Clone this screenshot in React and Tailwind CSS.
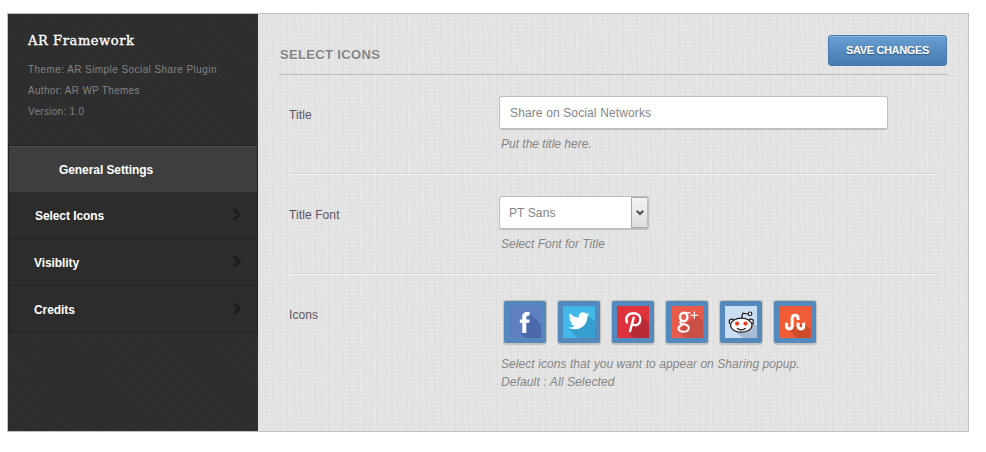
import React from "react";

const PAPER =
  "bg-[#e2e2e2] bg-[repeating-linear-gradient(90deg,rgba(255,255,255,0.16)_0_1px,transparent_1px_3px),repeating-linear-gradient(90deg,rgba(0,0,0,0.01)_0_2px,transparent_2px_7px),repeating-linear-gradient(84deg,rgba(0,0,0,0.012)_0_1px,transparent_1px_5px),repeating-linear-gradient(0deg,rgba(255,255,255,0.1)_0_1px,transparent_1px_4px)]";

const DARK =
  "bg-[#2e2e2e] bg-[repeating-linear-gradient(45deg,rgba(255,255,255,0.01)_0_1px,transparent_1px_3px),repeating-linear-gradient(-45deg,rgba(0,0,0,0.03)_0_1px,transparent_1px_4px)]";

function NavItem({ label, indent }) {
  return (
    <a className={`flex h-[47px] items-center justify-between border-b border-[#232323] bg-[#2c2c2c] pr-[15px] ${indent}`}>
      <span className="pt-[2px] text-[12px] font-bold tracking-[-0.08px] text-white">{label}</span>
      <svg className="h-[16px] w-[10px]" viewBox="0 0 10 16" fill="none">
        <path d="M2 3 L7 8.4 L2 13.8" stroke="#3b3b3b" strokeWidth="3.4" />
        <path d="M2 2.4 L7 7.8 L2 13.2" stroke="#1d1d1d" strokeWidth="3.4" />
      </svg>
    </a>
  );
}

function Tile({ color, shade, shadow, children }) {
  return (
    <div className="flex h-[42px] w-[42px] items-center justify-center rounded-[2px] bg-[#5489be] shadow-[0_0_0_1px_#c2c0bc,0_2px_1px_rgba(0,0,0,0.15)]">
      <svg className="h-8 w-8" viewBox="0 0 32 32">
        <rect width="32" height="32" fill={color} />
        <path d={shadow} fill={shade} />
        {children}
      </svg>
    </div>
  );
}

function Row({ label, children, className }) {
  return (
    <div className={`flex ${className}`}>
      <div className="w-[210px] pt-[30px] text-[12px] leading-[20px] tracking-[0.1px] text-[#5c5360]">{label}</div>
      <div className="flex-1 pt-[21px]">{children}</div>
    </div>
  );
}

const HINT = "pl-[2px] text-[12px] italic leading-[18px] text-[#858585]";

export default function App() {
  return (
    <div className="h-[452px] w-[986px] bg-white pl-[7px] pt-[13px] font-['Liberation_Sans',Arial,sans-serif]">
      <div className="flex h-[419px] w-[962px] border border-[#c0c0c0]">
        <aside className={`w-[250px] ${DARK}`}>
          <div className="h-[131px] pl-5 pt-[17px]">
            <h1 className="font-['DejaVu_Serif',serif] text-[13px] leading-[20px] tracking-[0.6px] text-white [-webkit-text-stroke:0.35px_#fff]">AR Framework</h1>
            <div className="pt-[8px] text-[10px] leading-[21px] tracking-[0.43px] text-[#838383]">
              <p>Theme: AR Simple Social Share Plugin</p>
              <p className="tracking-[0.3px]">Author: AR WP Themes</p>
              <p className="tracking-[0.3px]">Version: 1.0</p>
            </div>
          </div>
          <nav className="border-x border-t border-[#232323]">
            <a className="flex h-[46px] items-center border-t border-[#4d4d4f] bg-[#3e3e40] pl-[50px] text-[12px] font-bold tracking-[-0.08px] text-white">
              General Settings
            </a>
            <NavItem label="Select Icons" indent="pl-[26px]" />
            <NavItem label="Visiblity" indent="pl-[25px]" />
            <NavItem label="Credits" indent="pl-[25px]" />
          </nav>
        </aside>
        <main className={`flex-1 pl-[21px] pr-[20px] ${PAPER}`}>
          <header className="flex h-[61px] justify-between border-b border-[#bdbdbd] pt-[21px]">
            <h2 className="pl-[1px] pt-[10px] text-[13px] font-bold leading-[20px] tracking-[0.35px] text-[#858585] [text-shadow:0_1px_0_#eee]">SELECT ICONS</h2>
            <button className="mr-px h-[31px] w-[119px] rounded-[3px] border border-[#467aae] bg-gradient-to-b from-[#699fd3] to-[#467aad] text-[11px] font-bold tracking-[-0.36px] text-white shadow-[inset_0_1px_0_#8ab6e0] [text-shadow:0_1px_1px_#2d5885]">
              SAVE CHANGES
            </button>
          </header>
          <div className="pl-[10px] pr-[10px]">
            <Row label="Title" className="h-[100px] border-b border-[#f6f6f6] shadow-[inset_0_-1px_0_#d3d3d3]">
              <div className="flex h-[34px] w-[389px] items-center rounded-[3px] border border-b-2 border-[#bebebe] bg-white pl-[10px] text-[12px] tracking-[0.13px] text-[#858585]">
                Share on Social Networks
              </div>
              <p className={`pt-[5px] ${HINT}`}>Put the title here.</p>
            </Row>
            <Row label="Title Font" className="h-[100px] border-b border-[#f6f6f6] shadow-[inset_0_-1px_0_#d3d3d3]">
              <div className="flex h-[34px] w-[150px] items-stretch rounded-[3px] border border-b-2 border-r-2 border-[#bebebe] bg-white">
                <span className="flex flex-1 items-center pl-[9px] text-[12px] tracking-[0.1px] text-[#858585]">PT Sans</span>
                <span className="flex w-[16px] items-center justify-center border border-r-0 border-[#aaa] bg-gradient-to-b from-[#f3f3f3] to-[#dedede]">
                  <svg className="h-[6px] w-[8px]" viewBox="0 0 8 6" fill="none">
                    <path d="M0.8 0.8 L4 4 L7.2 0.8" stroke="#4c4c4c" strokeWidth="2" />
                  </svg>
                </span>
              </div>
              <p className={`pt-[5px] ${HINT}`}>Select Font for Title</p>
            </Row>
            <Row label="Icons" className="h-[140px]">
              <div className="flex gap-[12px] pl-[5px] pt-[5px]">
                <Tile color="#5e7fc0" shade="#4b69ab" shadow="M20.5 7 L32 18.5 V32 H16 L12 28 Z">
                  <path d="M13.3 27V16.8h-2.5v-3.4h2.5v-2.2c0-3.6 1.9-5.2 4.9-5.2 1 0 1.7.1 2.4.3v3.3h-1.4c-1.5 0-1.9.7-1.9 1.9v1.9h3.3l-.4 3.4h-2.9V27z" fill="#fff" />
                </Tile>
                <Tile color="#42b8e8" shade="#369fce" shadow="M26 10 L32 16 V32 H14.5 L7 24 Z">
                  <path transform="translate(5.6 4.4) scale(.87)" d="M23.95 4.57a10 10 0 0 1-2.82.77 4.96 4.96 0 0 0 2.16-2.72c-.95.55-2 .95-3.13 1.18a4.92 4.92 0 0 0-8.38 4.48C7.69 8.09 4.07 6.13 1.64 3.16a4.92 4.92 0 0 0 1.52 6.57 4.9 4.9 0 0 1-2.23-.61v.06c0 2.38 1.7 4.37 3.95 4.82a5 5 0 0 1-2.21.09 4.94 4.94 0 0 0 4.6 3.42A9.87 9.87 0 0 1 0 19.54a13.99 13.99 0 0 0 7.55 2.21c9.14 0 14.3-7.72 14.02-14.64.96-.7 1.8-1.56 2.46-2.55z" fill="#fff" />
                </Tile>
                <Tile color="#e0323b" shade="#b92b34" shadow="M23.5 9 L32 17.5 V32 H16.5 L12 27 Z">
                  <path d="M10 16.2C7.8 11.7 11 7.2 16.4 7.2c4.4 0 6.9 2.5 6.9 5.7 0 3.8-2.1 6.3-5 6.3-1.4 0-2.4-.7-2.8-1.5M16.6 11.7L13 25.2" fill="none" stroke="#fff" strokeWidth="2.4" strokeLinecap="round" />
                </Tile>
                <Tile color="#e95a4b" shade="#c94e43" shadow="M26 9 L32 15 V32 H15 L8 25 L18 15 Z">
                  <g fill="none" stroke="#fff">
                    <ellipse cx="12.7" cy="11" rx="3.7" ry="4.2" strokeWidth="2.4" />
                    <path d="M14 6.8h5.3" strokeWidth="1.4" />
                    <path d="M10.5 14.7c-2.3 1.6-1.6 2.9.6 3.3l3 .6c5 .9 5 7.1-1.3 7.1-6.8 0-6.8-5.3-1.5-6.7" strokeWidth="2" />
                    <path d="M23.4 5.6v7.4M19.7 9.3h7.4" strokeWidth="1.2" />
                  </g>
                </Tile>
                <Tile color="#c9def3" shade="#a7bbd4" shadow="M27 15 L32 20 V32 H18 L9 25 Z">
                  <g fill="#fff" stroke="#222" strokeWidth="1.2">
                    <path d="M16.5 12.5l1.3-5.4 5.4.9" fill="none" />
                    <circle cx="25" cy="7.8" r="1.8" />
                    <circle cx="6.8" cy="15.7" r="2.6" />
                    <circle cx="25.8" cy="15.7" r="2.6" />
                    <ellipse cx="16.3" cy="19.2" rx="10.7" ry="7" />
                    <path d="M12 22.3c2.4 2 6.4 2 8.8 0" fill="none" />
                  </g>
                  <circle cx="12.1" cy="17.6" r="2.1" fill="#f03c1c" />
                  <circle cx="20.5" cy="17.6" r="2.1" fill="#f03c1c" />
                </Tile>
                <Tile color="#f15c36" shade="#d04d2b" shadow="M25.5 17 L32 23.5 V32 H17.5 L9 23 Z">
                  <path d="M7.6 16.8v3c0 4.2 5.6 4.2 5.6 0v-7c0-4.6 5.9-4.6 5.9 0v1.2M19.1 16.8v3c0 4.2 5.6 4.2 5.6 0v-3" fill="none" stroke="#fff" strokeWidth="3" />
                </Tile>
              </div>
              <p className={`pt-[12px] ${HINT}`}>
                <span className="tracking-[0.07px]">Select icons that you want to appear on Sharing popup.</span>
                <br />
                <span className="tracking-[0.12px]">Default : All Selected</span>
              </p>
            </Row>
          </div>
        </main>
      </div>
    </div>
  );
}
